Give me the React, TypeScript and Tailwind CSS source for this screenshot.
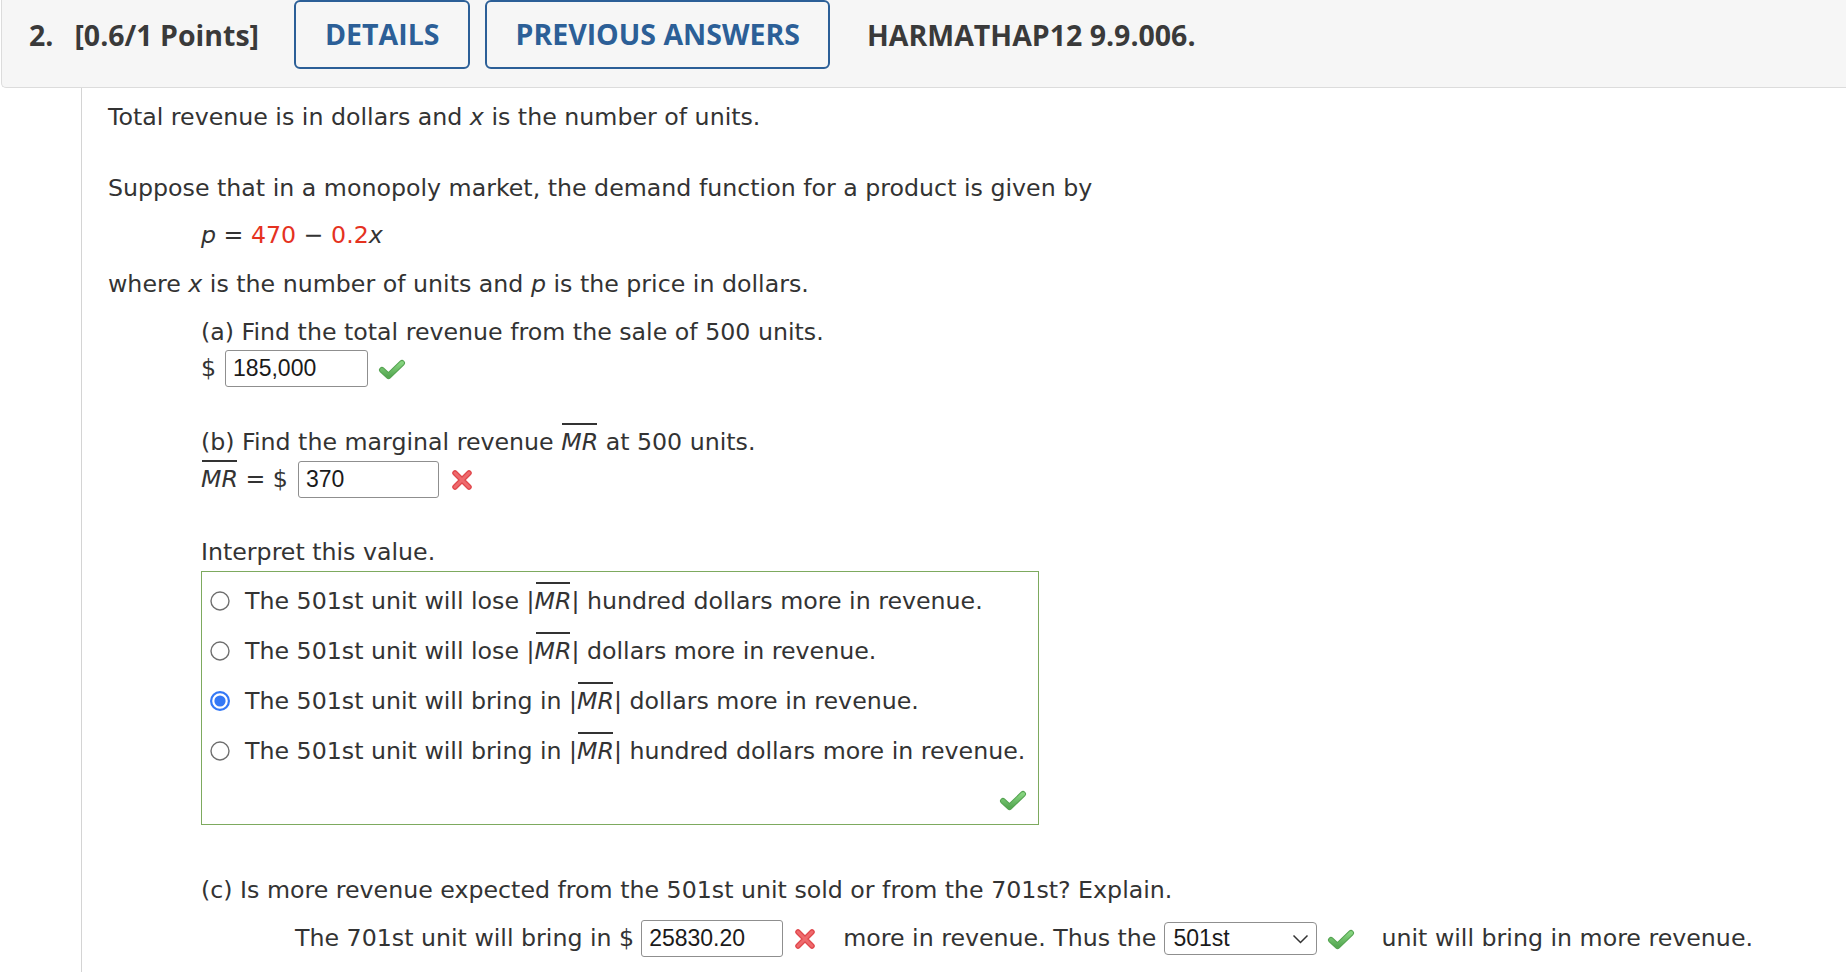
import React from "react";

const Check = ({ className = "" }: { className?: string }) => (
  <svg width="28" height="22" viewBox="0 0 28 22" className={className}>
    <defs>
      <linearGradient id="cg" x1="0" y1="0" x2="0" y2="1">
        <stop offset="0" stopColor="#86d47f" />
        <stop offset="1" stopColor="#56a853" />
      </linearGradient>
    </defs>
    <path d="M4 12 L10.5 18 L24 5" fill="none" stroke="#55a351" strokeWidth="6" strokeLinecap="round" strokeLinejoin="round" />
    <path d="M4 12 L10.5 18 L24 5" fill="none" stroke="url(#cg)" strokeWidth="4" strokeLinecap="round" strokeLinejoin="round" />
  </svg>
);

const Cross = () => (
  <svg width="24" height="24" viewBox="0 0 24 24">
    <path d="M5 5 L19 19 M19 5 L5 19" fill="none" stroke="#e0474c" strokeWidth="5.5" strokeLinecap="round" />
    <path d="M5 5 L19 19 M19 5 L5 19" fill="none" stroke="#ee6a6d" strokeWidth="3" strokeLinecap="round" />
  </svg>
);

const RadioOff = () => (
  <svg width="20" height="20" viewBox="0 0 20 20">
    <circle cx="10" cy="10" r="9" fill="#fff" stroke="#6f6f6f" strokeWidth="1.4" />
  </svg>
);

const RadioOn = () => (
  <svg width="20" height="20" viewBox="0 0 20 20">
    <circle cx="10" cy="10" r="8.9" fill="#fff" stroke="#3478f6" strokeWidth="2.2" />
    <circle cx="10" cy="10" r="5.6" fill="#3478f6" />
  </svg>
);

const MR = () => (
  <span className="relative italic">
    MR
    <span className="absolute left-[1px] right-[1px] top-[-5px] h-[2px] bg-[#333]" />
  </span>
);

const Box = ({ value, w }: { value: string; w: string }) => (
  <div
    className={`${w} h-[37px] border border-[#8f8f8f] rounded-[3px] bg-white flex items-center pl-[7px] font-['Liberation_Sans',Arial,sans-serif] text-[23px] text-[#1a1a1a]`}
  >
    {value}
  </div>
);

const Option = ({ on, children }: { on?: boolean; children: React.ReactNode }) => (
  <div className="h-[50px] flex items-center">
    <div className="ml-[8px] w-[20px] flex">{on ? <RadioOn /> : <RadioOff />}</div>
    <div className="ml-[15px] leading-[36px]">{children}</div>
  </div>
);

export default function App() {
  return (
    <div className="min-h-screen flex flex-col bg-white">
      <div className="ml-px h-[88px] shrink-0 bg-[#f6f6f6] border-l border-b border-[#dcdcdc] rounded-bl-[5px] flex items-start font-['Open_Sans',sans-serif] font-bold text-[28.5px] text-[#3a3a3a]">
        <div className="h-[70px] flex items-center pl-[27px]">
          <span>2.</span>
          <span className="ml-[21px]">[0.6/1 Points]</span>
        </div>
        <div className="ml-[35px] h-[69px] px-[29px] border-2 border-[#2c5f97] rounded-[6px] text-[#2c5f97] flex items-center">
          DETAILS
        </div>
        <div className="ml-[15px] h-[69px] px-[28px] border-2 border-[#2c5f97] rounded-[6px] text-[#2c5f97] flex items-center">
          PREVIOUS ANSWERS
        </div>
        <div className="ml-[37px] h-[70px] flex items-center">HARMATHAP12 9.9.006.</div>
      </div>

      <div className="flex flex-1">
        <div className="w-[82px] shrink-0 border-r border-[#d4d4d4]" />
        <div className="pl-[26px] font-['DejaVu_Sans',Verdana,sans-serif] text-[23.7px] text-[#333]">
          <div className="pt-[11px] leading-[36px]">
            Total revenue is in dollars and <i>x</i> is the number of units.
          </div>
          <div className="mt-[35px] leading-[36px]">
            Suppose that in a monopoly market, the demand function for a product is given by
          </div>
          <div className="mt-[11px] ml-[93px] leading-[36px]">
            <i>p</i> = <span className="text-[#e5321f]">470</span> − <span className="text-[#e5321f]">0.2</span>
            <i>x</i>
          </div>
          <div className="mt-[13px] leading-[36px]">
            where <i>x</i> is the number of units and <i>p</i> is the price in dollars.
          </div>

          <div className="ml-[93px]">
            <div className="mt-[12px] leading-[36px]">(a) Find the total revenue from the sale of 500 units.</div>
            <div className="flex items-center h-[37px]">
              <span>$</span>
              <div className="ml-[9px]">
                <Box value="185,000" w="w-[143px]" />
              </div>
              <div className="ml-[10px] flex">
                <Check />
              </div>
            </div>

            <div className="mt-[37px] leading-[36px]">
              (b) Find the marginal revenue <MR /> at 500 units.
            </div>
            <div className="mt-[1px] flex items-center h-[37px]">
              <span>
                <MR /> = $
              </span>
              <div className="ml-[10px]">
                <Box value="370" w="w-[141px]" />
              </div>
              <div className="ml-[11px] flex">
                <Cross />
              </div>
            </div>

            <div className="mt-[36px] leading-[36px]">Interpret this value.</div>
            <div className="mt-[1px] w-[838px] h-[254px] border border-[#7daa5e] flex flex-col">
              <div className="pt-[4px]">
                <Option>
                  The 501st unit will lose |<MR />| hundred dollars more in revenue.
                </Option>
                <Option>
                  The 501st unit will lose |<MR />| dollars more in revenue.
                </Option>
                <Option on>
                  The 501st unit will bring in |<MR />| dollars more in revenue.
                </Option>
                <Option>
                  The 501st unit will bring in |<MR />| hundred dollars more in revenue.
                </Option>
              </div>
              <div className="flex-1 flex items-center justify-end pr-[11px]">
                <Check />
              </div>
            </div>

            <div className="mt-[47px] leading-[36px]">
              (c) Is more revenue expected from the 501st unit sold or from the 701st? Explain.
            </div>
            <div className="mt-[12px] ml-[94px] flex items-center h-[37px] whitespace-nowrap">
              <span>The 701st unit will bring in $</span>
              <div className="ml-[7px]">
                <Box value="25830.20" w="w-[142px]" />
              </div>
              <div className="ml-[10px] flex">
                <Cross />
              </div>
              <span className="ml-[26px]">more in revenue. Thus the</span>
              <div className="ml-[8px] w-[153px] h-[33px] border border-[#8f8f8f] rounded-[4px] bg-white flex items-center justify-between pl-[8px] pr-[7px] font-['Liberation_Sans',Arial,sans-serif] text-[23px] text-[#1a1a1a]">
                <span>501st</span>
                <svg width="17" height="10" viewBox="0 0 17 10">
                  <path d="M1.5 1.5 L8.5 8.5 L15.5 1.5" fill="none" stroke="#333" strokeWidth="1.5" />
                </svg>
              </div>
              <div className="ml-[10px] flex">
                <Check />
              </div>
              <span className="ml-[26px]">unit will bring in more revenue.</span>
            </div>
          </div>
        </div>
      </div>
    </div>
  );
}
